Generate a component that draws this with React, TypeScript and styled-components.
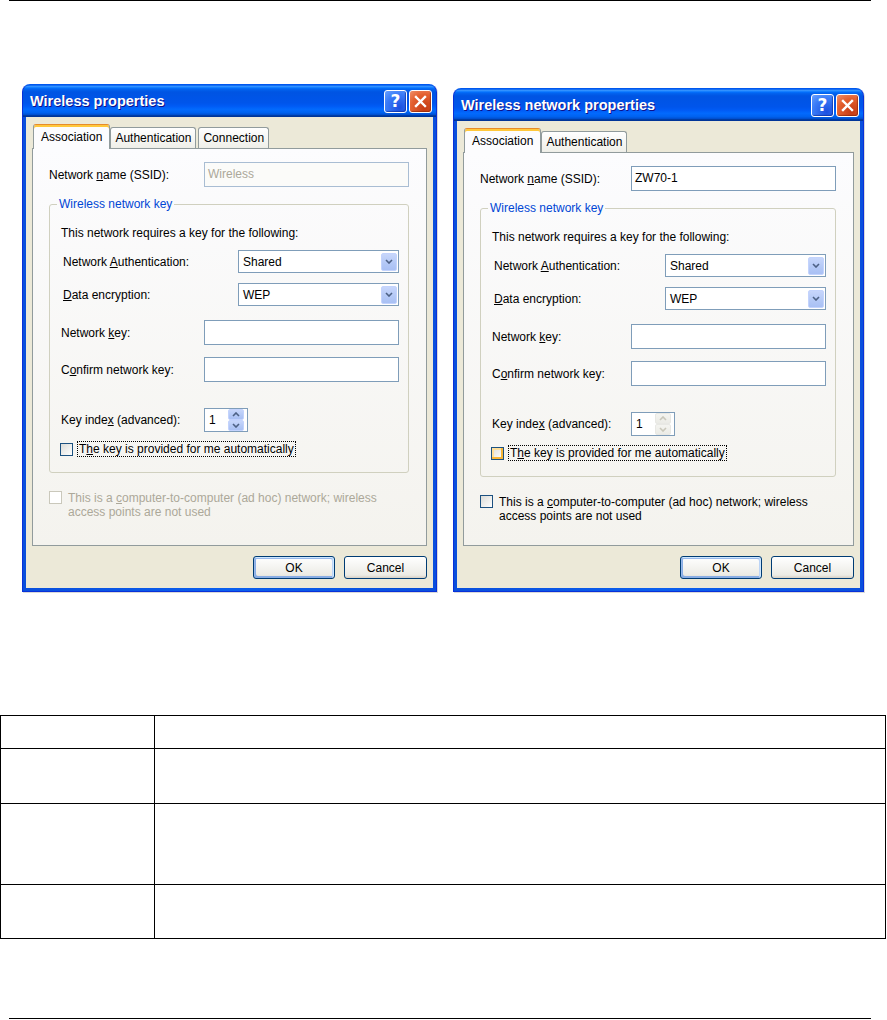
import React from "react";
import styled, { createGlobalStyle, css } from "styled-components";

const GlobalStyle = createGlobalStyle`
  html, body { margin: 0; padding: 0; background: #ffffff; }
  body { font-family: "Liberation Sans", Arial, sans-serif; color: #000; }
  * { box-sizing: border-box; }
`;

const Page = styled.div`
  width: 887px;
  height: 1020px;
  overflow: hidden;
  background: #fff;
  display: flex;
  flex-direction: column;
`;

const Rule = styled.div<{ $mt: number }>`
  margin: ${(p) => p.$mt}px 16px 0 9px;
  height: 1px;
  background: #000;
  flex-shrink: 0;
`;

const DialogRow = styled.div`
  display: flex;
  align-items: flex-end;
  gap: 16px;
  margin-top: 83px;
  padding-left: 22px;
`;

const Window = styled.div<{ $w: number }>`
  width: ${(p) => p.$w}px;
  display: flex;
  flex-direction: column;
  border: 1px solid #0831d9;
  border-top-color: #0058ee;
  border-radius: 8px 8px 0 0;
  overflow: hidden;
  background: linear-gradient(to right, #0a4fdc, #0b5fee 50%, #0a4fdc);
  box-shadow: 1px 1px 0 rgba(0, 0, 0, 0.15);
`;

const TitleBar = styled.div`
  height: 32px;
  display: flex;
  align-items: center;
  justify-content: space-between;
  padding: 0 4px 0 7px;
  background: linear-gradient(
    180deg,
    #0058ee 0%,
    #3593ff 4%,
    #288eff 6%,
    #127dff 8%,
    #036ffc 10%,
    #0262ee 14%,
    #0057e5 20%,
    #0054e3 24%,
    #0055eb 56%,
    #005bf5 66%,
    #026afe 76%,
    #0062ef 86%,
    #0052d6 92%,
    #0040ab 94%,
    #003092 100%
  );
`;

const TitleText = styled.span`
  color: #fff;
  font-family: "Liberation Sans", Arial, sans-serif;
  font-weight: bold;
  font-size: 14.5px;
  line-height: 18px;
  text-shadow: 1px 1px #0f1089;
  white-space: nowrap;
`;

const TitleButtons = styled.div`
  display: flex;
  gap: 2px;
  align-items: center;
`;

const CaptionButton = styled.div<{ $kind: "help" | "close" }>`
  width: 23px;
  height: 23px;
  border: 1px solid #fff;
  border-radius: 3px;
  display: flex;
  align-items: center;
  justify-content: center;
  color: #fff;
  font-family: "DejaVu Sans", "Liberation Sans", sans-serif;
  font-weight: bold;
  font-size: 17px;
  line-height: 1;
  ${(p) =>
    p.$kind === "help"
      ? css`
          background: radial-gradient(circle at 70% 80%, #1c4fe0 0%, #3a7bf7 60%, #6aa2ff 100%);
          box-shadow: inset -1px -1px 1px rgba(0, 20, 120, 0.5);
        `
      : css`
          background: radial-gradient(circle at 70% 80%, #c43a13 0%, #e4602f 60%, #f0916d 100%);
          box-shadow: inset -1px -1px 1px rgba(110, 20, 0, 0.5);
        `}
`;

const Body = styled.div`
  background: #ece9d8;
  margin: 0 3px 3px;
  padding: 7px 6px 9px;
  display: flex;
  flex-direction: column;
`;

const TabStrip = styled.div`
  display: flex;
  align-items: flex-end;
  height: 25px;
  margin-bottom: -1px;
  padding-left: 1px;
  position: relative;
  z-index: 1;
`;

const Tab = styled.div<{ $active?: boolean; $gap?: number }>`
  font-size: 12px;
  display: flex;
  align-items: center;
  justify-content: center;
  white-space: nowrap;
  border: 1px solid #919b9c;
  border-bottom: none;
  border-radius: 3px 3px 0 0;
  margin-left: ${(p) => p.$gap ?? 0}px;
  ${(p) =>
    p.$active
      ? css`
          height: 25px;
          padding: 0 7px 1px;
          background: #fcfcfe;
          border-top: 1px solid #e68b2c;
          box-shadow: inset 0 2px #ffc83c;
        `
      : css`
          height: 21px;
          margin-bottom: 1px;
          padding: 0 4px;
          background: linear-gradient(180deg, #fff, #fafaf9 26%, #f0f0ea 95%, #ecebe6);
        `}
`;

const Panel = styled.div<{ $h: number }>`
  height: ${(p) => p.$h}px;
  border: 1px solid #919b9c;
  background: linear-gradient(180deg, #fcfcfe, #f4f3ee);
  padding: 13px 17px 0 16px;
  display: flex;
  flex-direction: column;
`;

const FieldRow = styled.div<{ $mt?: number }>`
  display: flex;
  align-items: center;
  justify-content: space-between;
  margin-top: ${(p) => p.$mt ?? 0}px;
`;

const Label = styled.span<{ $indent?: number; $disabled?: boolean }>`
  font-size: 12px;
  line-height: 14px;
  white-space: nowrap;
  padding-left: ${(p) => p.$indent ?? 0}px;
  color: ${(p) => (p.$disabled ? "#aca899" : "#000")};
`;

const TextBox = styled.div<{ $w: number; $h?: number; $disabled?: boolean }>`
  width: ${(p) => p.$w}px;
  height: ${(p) => p.$h ?? 25}px;
  border: 1px solid ${(p) => (p.$disabled ? "#a9bdd3" : "#7f9db9")};
  background: ${(p) => (p.$disabled ? "#fbfbf9" : "#fff")};
  color: ${(p) => (p.$disabled ? "#aca899" : "#000")};
  font-size: 12px;
  line-height: ${(p) => (p.$h ?? 25) - 2}px;
  padding-left: 3px;
  white-space: nowrap;
`;

const Combo = styled.div`
  width: 161px;
  height: 23px;
  border: 1px solid #7f9db9;
  background: #fff;
  display: flex;
  align-items: center;
  justify-content: space-between;
  padding: 0 1px 0 4px;
  font-size: 12px;
`;

const DropButton = styled.div`
  width: 16px;
  height: 18px;
  border-radius: 2px;
  border: 1px solid #c3d3fd;
  background: linear-gradient(180deg, #c7d6fb, #b3c8f6 60%, #a9c0f4);
  display: flex;
  align-items: center;
  justify-content: center;
`;

const GroupBox = styled.fieldset`
  margin: 10px 0 0;
  padding: 15px 9px 15px 7px;
  border: 1px solid #d0d0bf;
  border-radius: 3px;
  min-width: 0;
  display: flex;
  flex-direction: column;
`;

const Legend = styled.legend`
  padding: 0 2px;
  font-size: 12px;
  line-height: 14px;
  color: #0046d5;
`;

const Intro = styled.div`
  font-size: 12px;
  line-height: 14px;
  padding-left: 4px;
`;

const ControlSlot = styled.div`
  width: 195px;
  display: flex;
`;

const Spinner = styled.div`
  width: 44px;
  height: 24px;
  border: 1px solid #7f9db9;
  background: #fff;
  display: flex;
  align-items: center;
  justify-content: space-between;
  padding: 0 3px 0 4px;
  font-size: 12px;
`;

const SpinButtons = styled.div`
  display: flex;
  flex-direction: column;
  width: 16px;
  height: 22px;
`;

const SpinButton = styled.div<{ $disabled?: boolean }>`
  flex: 1;
  display: flex;
  align-items: center;
  justify-content: center;
  border-radius: 2px;
  border: 1px solid ${(p) => (p.$disabled ? "#e8e8e4" : "#c3d3fd")};
  background: ${(p) =>
    p.$disabled
      ? "linear-gradient(180deg, #f4f4f0, #ebebe6)"
      : "linear-gradient(180deg, #c7d6fb, #b3c8f6 60%, #a9c0f4)"};
`;

const CheckRow = styled.div<{ $mt?: number; $indent?: number; $align?: string }>`
  display: flex;
  align-items: ${(p) => p.$align ?? "center"};
  gap: 6px;
  margin-top: ${(p) => p.$mt ?? 0}px;
  padding-left: ${(p) => p.$indent ?? 0}px;
`;

const CheckBox = styled.div<{ $state?: "normal" | "hover" | "disabled" }>`
  width: 13px;
  height: 13px;
  flex-shrink: 0;
  ${(p) =>
    p.$state === "disabled"
      ? css`
          border: 1px solid #cac8bb;
          background: #fff;
        `
      : p.$state === "hover"
      ? css`
          border: 1px solid #1c5180;
          background: linear-gradient(135deg, #dcdcd7, #fff);
          box-shadow: inset -2px -2px #f8b636, inset 2px 2px #fedf9c;
        `
      : css`
          border: 1px solid #1c5180;
          background: linear-gradient(135deg, #dcdcd7, #fff);
        `}
`;

const FocusLabel = styled.span`
  font-size: 12px;
  line-height: 14px;
  border: 1px dotted #000;
  padding: 0 1px;
  margin-left: -2px;
  white-space: nowrap;
`;

const CheckText = styled.span<{ $disabled?: boolean }>`
  font-size: 12px;
  line-height: 14px;
  color: ${(p) => (p.$disabled ? "#aca899" : "#000")};
`;

const ButtonRow = styled.div`
  display: flex;
  justify-content: flex-end;
  gap: 9px;
  margin-top: 10px;
`;

const PushButton = styled.div<{ $w: number; $default?: boolean }>`
  width: ${(p) => p.$w}px;
  height: 23px;
  border: 1px solid #003c74;
  border-radius: 3px;
  background: linear-gradient(180deg, #fff, #ecebe5 86%, #d8d0c4);
  display: flex;
  align-items: center;
  justify-content: center;
  font-size: 12px;
  ${(p) =>
    p.$default &&
    css`
      box-shadow: inset -1px 1px #cee7ff, inset 1px 2px #98b8ea, inset -2px 2px #bcd4f6,
        inset 1px -1px #89ade4, inset 2px -2px #89ade4;
    `}
`;

const Table = styled.table`
  margin-top: 123px;
  width: 886px;
  border-collapse: collapse;
  flex-shrink: 0;
`;

const Cell = styled.td<{ $first?: boolean }>`
  border: 1px solid #000;
  width: ${(p) => (p.$first ? "154px" : "auto")};
  padding: 0;
`;

const Chevron = ({ color = "#4d6185", up = false }: { color?: string; up?: boolean }) => (
  <svg width="8" height="5" viewBox="0 0 8 5" style={{ display: "block" }}>
    <path
      d={up ? "M1 4 L4 1 L7 4" : "M1 1 L4 4 L7 1"}
      fill="none"
      stroke={color}
      strokeWidth="1.6"
    />
  </svg>
);

const CloseGlyph = () => (
  <svg width="13" height="13" viewBox="0 0 13 13" style={{ display: "block" }}>
    <path d="M2 2 L11 11 M11 2 L2 11" stroke="#fff" strokeWidth="2.4" strokeLinecap="square" />
  </svg>
);

type DialogProps = {
  title: string;
  width: number;
  panelHeight: number;
  tabs: string[];
  ssid: string;
  ssidDisabled?: boolean;
  spinDisabled?: boolean;
  autoHover?: boolean;
  adhocDisabled?: boolean;
};

const Dialog = ({
  title,
  width,
  panelHeight,
  tabs,
  ssid,
  ssidDisabled,
  spinDisabled,
  autoHover,
  adhocDisabled,
}: DialogProps) => (
  <Window $w={width}>
    <TitleBar>
      <TitleText>{title}</TitleText>
      <TitleButtons>
        <CaptionButton $kind="help">?</CaptionButton>
        <CaptionButton $kind="close">
          <CloseGlyph />
        </CaptionButton>
      </TitleButtons>
    </TitleBar>
    <Body>
      <TabStrip>
        {tabs.map((t, i) => (
          <Tab key={t} $active={i === 0} $gap={i > 1 ? 2 : 0}>
            {t}
          </Tab>
        ))}
      </TabStrip>
      <Panel $h={panelHeight}>
        <FieldRow>
          <Label>
            Network <u>n</u>ame (SSID):
          </Label>
          <TextBox $w={205} $disabled={ssidDisabled}>
            {ssid}
          </TextBox>
        </FieldRow>
        <GroupBox>
          <Legend>Wireless network key</Legend>
          <Intro>This network requires a key for the following:</Intro>
          <FieldRow $mt={10}>
            <Label $indent={6}>
              Network <u>A</u>uthentication:
            </Label>
            <Combo>
              <span>Shared</span>
              <DropButton>
                <Chevron />
              </DropButton>
            </Combo>
          </FieldRow>
          <FieldRow $mt={10}>
            <Label $indent={6}>
              <u>D</u>ata encryption:
            </Label>
            <Combo>
              <span>WEP</span>
              <DropButton>
                <Chevron />
              </DropButton>
            </Combo>
          </FieldRow>
          <FieldRow $mt={14}>
            <Label $indent={4}>
              Network <u>k</u>ey:
            </Label>
            <TextBox $w={195} />
          </FieldRow>
          <FieldRow $mt={12}>
            <Label $indent={4}>
              C<u>o</u>nfirm network key:
            </Label>
            <TextBox $w={195} />
          </FieldRow>
          <FieldRow $mt={26}>
            <Label $indent={4}>
              Key inde<u>x</u> (advanced):
            </Label>
            <ControlSlot>
              <Spinner>
                <span>1</span>
                <SpinButtons>
                  <SpinButton $disabled={spinDisabled}>
                    <Chevron up color={spinDisabled ? "#c9c7ba" : "#4d6185"} />
                  </SpinButton>
                  <SpinButton $disabled={spinDisabled}>
                    <Chevron color={spinDisabled ? "#c9c7ba" : "#4d6185"} />
                  </SpinButton>
                </SpinButtons>
              </Spinner>
            </ControlSlot>
          </FieldRow>
          <CheckRow $mt={9} $indent={3}>
            <CheckBox $state={autoHover ? "hover" : "normal"} />
            <FocusLabel>
              T<u>h</u>e key is provided for me automatically
            </FocusLabel>
          </CheckRow>
        </GroupBox>
        <CheckRow $mt={18} $align="flex-start">
          <CheckBox $state={adhocDisabled ? "disabled" : "normal"} />
          <CheckText $disabled={adhocDisabled}>
            This is a <u>c</u>omputer-to-computer (ad hoc) network; wireless
            <br />
            access points are not used
          </CheckText>
        </CheckRow>
      </Panel>
      <ButtonRow>
        <PushButton $w={82} $default>
          OK
        </PushButton>
        <PushButton $w={83}>Cancel</PushButton>
      </ButtonRow>
    </Body>
  </Window>
);

const rowHeights = [33, 55, 81, 54];

export default function App() {
  return (
    <>
      <GlobalStyle />
      <Page>
        <Rule $mt={0} />
        <DialogRow>
          <Dialog
            title="Wireless properties"
            width={415}
            panelHeight={398}
            tabs={["Association", "Authentication", "Connection"]}
            ssid="Wireless"
            ssidDisabled
            adhocDisabled
          />
          <Dialog
            title="Wireless network properties"
            width={411}
            panelHeight={394}
            tabs={["Association", "Authentication"]}
            ssid="ZW70-1"
            spinDisabled
            autoHover
          />
        </DialogRow>
        <Table>
          <tbody>
            {rowHeights.map((h, i) => (
              <tr key={i} style={{ height: h }}>
                <Cell $first />
                <Cell />
              </tr>
            ))}
          </tbody>
        </Table>
        <Rule $mt={79} />
      </Page>
    </>
  );
}
